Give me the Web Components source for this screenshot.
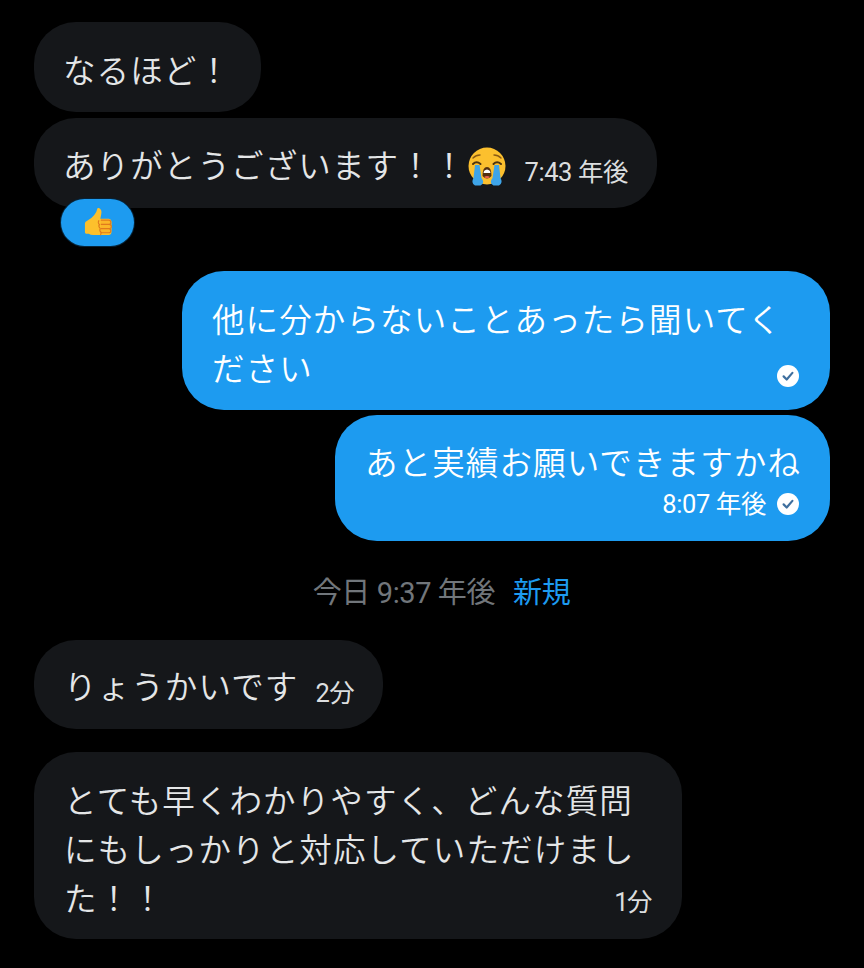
<!DOCTYPE html>
<html lang="ja"><head><meta charset="utf-8"><title>DM</title>
<style>
html,body{margin:0;background:#000}
body{width:864px;height:968px;overflow:hidden;font-family:"Noto Sans CJK JP","Noto Sans",sans-serif}
</style></head><body>
<template id="t-thread"><style>
:host{display:flex;flex-direction:column;box-sizing:border-box;width:864px;height:968px;padding:22px 34px 0;background:#000}
</style><slot></slot></template>

<template id="t-bubble"><style>
:host{display:block;box-sizing:border-box;position:relative;
 font:350 32.500px/49px "Noto Sans CJK JP",sans-serif;letter-spacing:1.120px;color:#e4e6e7;white-space:nowrap;
 background:#15171a;border-radius:42px;padding:var(--pad,22px 29px 0);margin-top:var(--mt,0);height:var(--h,auto);width:var(--w,fit-content)}
:host([me]){align-self:flex-end;background:#1d9bf0;color:#fff}
</style><slot></slot></template>

<template id="t-meta"><style>
:host{display:inline-flex;align-items:center;gap:11px;font:400 25.500px/30px Roboto,"Noto Sans CJK JP",sans-serif;letter-spacing:-.4px;color:#dcdedf;white-space:nowrap;vertical-align:-3px}
:host([me]){color:#fff}
</style><slot></slot></template>

<template id="t-check"><style>
:host{display:inline-block;width:22px;height:22px}
svg{display:block}
</style><svg width="22" height="22" viewBox="0 0 22 22"><circle cx="11" cy="11" r="11" fill="#fff"/><path d="M6.600 11.400l3.100 3.100 5.700-6.600" fill="none" stroke="#3f6f9e" stroke-width="2.200" stroke-linecap="round" stroke-linejoin="round"/></svg></template>

<template id="t-cry"><style>
:host{display:inline-block;width:39px;height:41px;vertical-align:-9px;margin-left:2px}
svg{display:block}
</style><svg width="39" height="41" viewBox="0 0 39 41">
<circle cx="19" cy="20" r="18.500" fill="#fcc02e"/>
<path d="M5 12q3-3 7-3M33 12q-3-3-7-3" fill="none" stroke="#8a5a14" stroke-width="1.400" stroke-linecap="round"/>
<path d="M5 18q3.500-3.500 7.500 0M25.500 18q3.500-3.500 7.500 0" fill="none" stroke="#4e3410" stroke-width="2" stroke-linecap="round"/>
<path d="M14.500 30q0-9 4.500-9t4.500 9q-4.500 5-9 0z" fill="#54300f"/>
<path d="M16 25q3-3 6 0l.5 2h-7z" fill="#fff"/>
<path d="M16 31q3-2 6 0q-3 2.500-6 0z" fill="#e8604c"/>
<path d="M7 19h4.500l2 13q4 5-1 7.500H7q-4.500-2.500-1.500-7.500z" fill="#3ea4e8"/>
<path d="M26.500 19H31l1.500 13q3 5-1.500 7.500h-5.500q-5-2.500-1-7.500z" fill="#3ea4e8"/>
</svg></template>

<template id="t-reaction"><style>
:host{position:absolute;left:27px;top:81px;box-sizing:border-box;width:73px;height:47px;background:#1d9bf0;border-radius:24px;box-shadow:0 0 0 1px #062338;display:flex;align-items:center;justify-content:center}
svg{display:block}
</style><svg width="28" height="31" viewBox="0 0 30 32">
<path d="M1 17q0-1.500 2-2.500q5-2.500 8-6.500q2.500-3 3-6q.3-2 2-1.500q3.500 1.500 2.500 6.500l-1 5h9q3 .5 3 3v11q0 3-3 3.500H10q-3 0-5-1.500H2q-1-.5-1-2z" fill="#fdc02c"/>
<path d="M18 13.500h8.500a2.200 2.200 0 0 1 0 4.500H18M18 18h9a2.200 2.200 0 0 1 0 4.500H18M18 22.500h8.500a2.200 2.200 0 0 1 0 4.500H18" fill="#fbb627" stroke="#e07a1c" stroke-width="1.200"/>
<path d="M16 13.500q-1.500 3 .5 4.500q-1.500 2.500 1 4.500q-1.500 2.500 1 4.500q-1 2-.5 2.800" fill="none" stroke="#e07a1c" stroke-width="1.200"/>
</svg></template>

<template id="t-date"><style>
:host{display:flex;align-items:center;justify-content:center;gap:18px;height:99px;box-sizing:border-box;padding:5px 0 0 19px;font:400 29px/34px Roboto,"Noto Sans CJK JP",sans-serif;color:#71767b;letter-spacing:-.4px}
b{font-weight:400;color:#1d9bf0}
</style><span><slot></slot></span><b><slot name="new"></slot></b></template>

<script>
const def=(name,tid)=>customElements.define(name,class extends HTMLElement{constructor(){super();this.attachShadow({mode:"open"}).appendChild(document.getElementById(tid).content.cloneNode(true))}});
def("dm-thread","t-thread");def("dm-bubble","t-bubble");def("dm-meta","t-meta");def("dm-check","t-check");def("dm-cry","t-cry");def("dm-reaction","t-reaction");def("dm-date","t-date");
</script>

<dm-thread>
<dm-bubble style="--h:90px;--w:227px">なるほど！</dm-bubble>
<dm-bubble style="--mt:6px;--h:90px;--w:623px;--pad:21px 29px 0">ありがとうございます！！<dm-cry></dm-cry><dm-meta style="margin-left:17px">7:43 年後</dm-meta><dm-reaction></dm-reaction></dm-bubble>
<dm-bubble me style="--mt:63px;--h:139px;--w:648px;--pad:22px 30px 0">他に分からないことあったら聞いてく<div style="display:flex;justify-content:space-between;align-items:flex-end;padding-right:1px">ださい<dm-check style="margin-bottom:4px"></dm-check></div></dm-bubble>
<dm-bubble me style="--mt:5px;--h:126px;--w:495px;--pad:21px 31px 0 30px">あと実績お願いできますかね<div style="display:flex;justify-content:flex-end"><dm-meta me style="margin-top:4px">8:07 年後<dm-check></dm-check></dm-meta></div></dm-bubble>
<dm-date>今日 9:37 年後<span slot="new">新規</span></dm-date>
<dm-bubble style="--h:89px;--w:349px;--pad:20px 29px 0 30px">りょうかいです<dm-meta style="margin-left:17px">2分</dm-meta></dm-bubble>
<dm-bubble style="--mt:23px;--h:187px;--w:648px;--pad:22px 31px 0 30px">とても早くわかりやすく、どんな質問<br>にもしっかりと対応していただけまし<div style="display:flex;justify-content:space-between;align-items:flex-end">た！！<dm-meta style="margin-bottom:4px;letter-spacing:-1.500px">1分</dm-meta></div></dm-bubble>
</dm-thread>
</body></html>
